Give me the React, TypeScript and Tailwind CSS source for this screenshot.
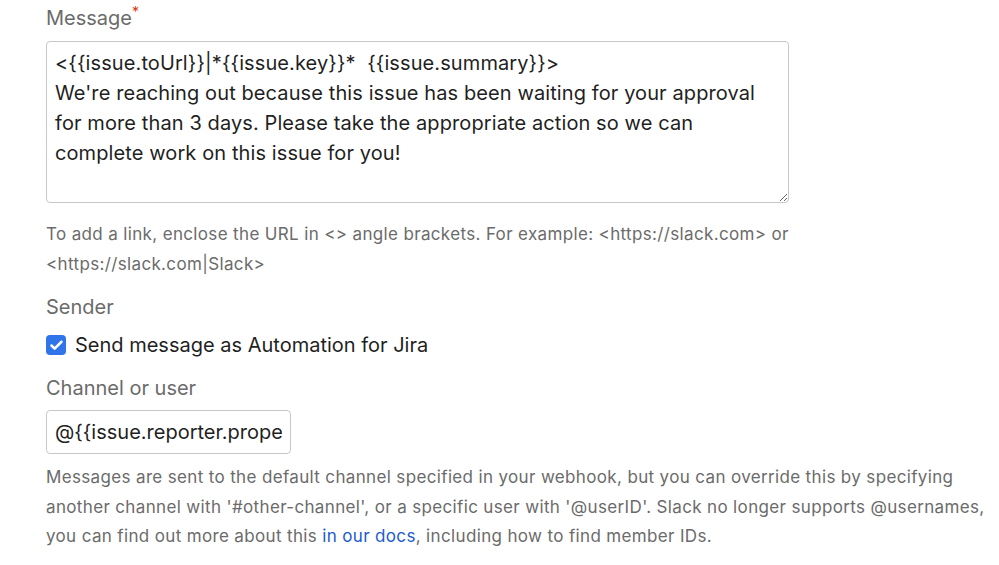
import { Check } from 'lucide-react';

const message =
  "<{{issue.toUrl}}|*{{issue.key}}*  {{issue.summary}}>\nWe're reaching out because this issue has been waiting for your approval for more than 3 days. Please take the appropriate action so we can complete work on this issue for you!";

export default function App() {
  return (
    <div className="min-h-screen bg-white pl-[46px] pt-[3px] font-['Inter',sans-serif] text-[#1f1f1f]">
      <div className="text-[20px] leading-[30px] text-[#6b6b6b]">
        Message<span className="relative -top-[8px] text-[14px] text-[#de350b]">*</span>
      </div>

      <textarea
        readOnly
        value={message}
        className="mt-[6px] block h-[162px] w-[743px] rounded-[4px] border border-[#c8c8c8] px-[8px] py-[6px] text-[20px] leading-[30px] tracking-[0.1px] text-[#1f1f1f] outline-none"
      />

      <p className="mt-[17px] whitespace-nowrap text-[17px] leading-[29.5px] tracking-[0.35px] text-[#6b6b6b]">
        To add a link, enclose the URL in &lt;&gt; angle brackets. For example: &lt;https://slack.com&gt; or
        <br />
        &lt;https://slack.com|Slack&gt;
      </p>

      <div className="mt-[13px] text-[20px] leading-[30px] text-[#6b6b6b]">Sender</div>

      <label className="mt-[8px] flex h-[30px] items-center gap-[9px]">
        <span className="flex h-[20px] w-[20px] items-center justify-center rounded-[4px] bg-[#2f74e8]">
          <Check className="h-[15px] w-[15px] text-white" strokeWidth={4} />
        </span>
        <span className="text-[20px]">Send message as Automation for Jira</span>
      </label>

      <div className="mt-[13px] text-[20px] leading-[30px] text-[#6b6b6b]">Channel or user</div>

      <input
        readOnly
        value="@{{issue.reporter.properties}}"
        className="mt-[7px] block h-[44px] w-[245px] rounded-[4px] border border-[#c8c8c8] px-[8px] text-[20px] text-[#1f1f1f] outline-none"
      />

      <p className="mt-[9px] whitespace-nowrap text-[17px] leading-[29.5px] tracking-[0.35px] text-[#6b6b6b]">
        Messages are sent to the default channel specified in your webhook, but you can override this by specifying
        <br />
        another channel with '#other-channel', or a specific user with '@userID'. Slack no longer supports @usernames,
        <br />
        you can find out more about this <a className="text-[#1c5bd1]">in our docs</a>, including how to find member IDs.
      </p>
    </div>
  );
}
